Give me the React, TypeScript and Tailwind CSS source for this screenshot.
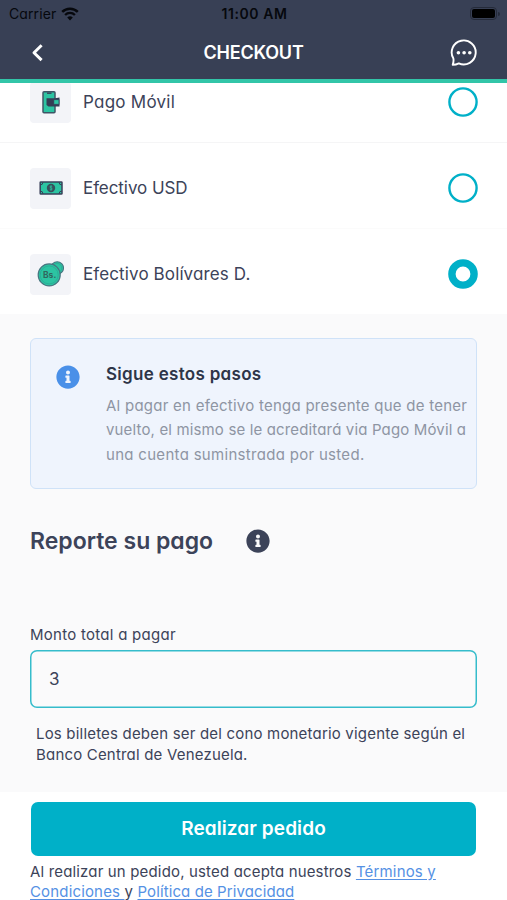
import { FaInfoCircle } from "react-icons/fa";

function PhoneIcon() {
  return (
    <svg width="20" height="24" viewBox="0 0 20 24" fill="none">
      <rect x="2" y="1.7" width="12" height="21" rx="1" fill="#2cc4a2" stroke="#3f5566" strokeWidth="1.5" />
      <path d="M6 3.2h4.5" stroke="#38405a" strokeWidth="1.4" />
      <path d="M5.5 8.2H14l4.5-.7v9H7.5l-2-1.5z" fill="#343d55" />
      <rect x="12.8" y="9.7" width="5.2" height="4.6" fill="#2cc4a2" stroke="#38405a" strokeWidth="0.8" />
    </svg>
  );
}

function BillIcon() {
  return (
    <svg width="24" height="14" viewBox="0 0 24 14" fill="none">
      <rect x="1.2" y="0.9" width="21.8" height="12.2" rx="0.6" fill="#2cc4a2" stroke="#38405a" strokeWidth="1.5" />
      <path d="M1 4a3 3 0 0 0 3-3M20 1a3 3 0 0 0 3 3M1 10a3 3 0 0 1 3 3M20 13a3 3 0 0 1 3-3" stroke="#38405a" strokeWidth="1" />
      <circle cx="12" cy="7" r="4.2" fill="#38505c" />
      <path d="M13.2 5.6c-.5-.7-2.3-.6-2.3.3 0 1.1 2.3.9 2.3 2.1 0 1-1.8 1.1-2.4.3M12 4.4v5.2" stroke="#2cc4a2" strokeWidth="0.8" />
    </svg>
  );
}

function CoinsIcon() {
  return (
    <svg width="27" height="27" viewBox="0 0 27 27">
      <circle cx="20.2" cy="7" r="6.3" fill="#2cc4a2" stroke="#477580" strokeWidth="1.1" />
      <circle cx="20.2" cy="7" r="4.6" fill="none" stroke="#2aa590" strokeWidth="0.7" />
      <circle cx="12.2" cy="13.9" r="11" fill="#2cc4a2" stroke="#477580" strokeWidth="1.2" />
      <circle cx="12.2" cy="13.9" r="9" fill="none" stroke="#2aa590" strokeWidth="0.7" />
      <text x="6" y="17.2" fontSize="8.5" fontWeight="700" fill="#31685f">Bs.</text>
    </svg>
  );
}

function WifiIcon() {
  return (
    <svg width="18" height="14" viewBox="0 0 18 14" fill="none" stroke="#06080d">
      <path d="M1.2 4.9a11 11 0 0 1 15.6 0" strokeWidth="2.5" />
      <path d="M4.1 8a6.9 6.9 0 0 1 9.8 0" strokeWidth="2.3" />
      <path d="M6.2 10.5a4 4 0 0 1 5.6 0L9 13.4z" fill="#06080d" stroke="none" />
    </svg>
  );
}

function ChatIcon() {
  return (
    <svg className="-mr-px" width="28" height="28" viewBox="0 0 28 28" fill="none">
      <path
        d="M3.4 19.6A12 12 0 1 1 8.8 24.4C7.2 25.2 5.2 25.8 2.7 25.8 3.5 23.6 3.8 21.8 3.4 19.6z"
        stroke="#fff"
        strokeWidth="1.9"
        strokeLinejoin="round"
      />
      <circle cx="8.4" cy="13.7" r="1.8" fill="#fff" />
      <circle cx="14.1" cy="13.7" r="1.8" fill="#fff" />
      <circle cx="19.8" cy="13.7" r="1.8" fill="#fff" />
    </svg>
  );
}

function Radio({ selected }: { selected: boolean }) {
  return (
    <svg className="-mr-px ml-auto" width="30" height="30" viewBox="0 0 30 30" fill="none" stroke="#00b0c8">
      {selected ? (
        <circle cx="15" cy="15" r="11.1" strokeWidth="7.4" />
      ) : (
        <circle cx="15" cy="15" r="13.6" strokeWidth="2.4" />
      )}
    </svg>
  );
}

const methods = [
  { name: "Pago Móvil", icon: <PhoneIcon />, selected: false, spacing: "tracking-[0.25px]" },
  { name: "Efectivo USD", icon: <BillIcon />, selected: false, spacing: "tracking-[-0.07px]" },
  { name: "Efectivo Bolívares D.", icon: <CoinsIcon />, selected: true, spacing: "tracking-[0.12px]" },
];

export default function App() {
  return (
    <div className="flex h-[900px] w-full flex-col overflow-hidden bg-[#fafafb] font-[Inter,sans-serif] text-[#3c4359] [font-feature-settings:'cv11']">
      <header className="z-10 h-[83px] shrink-0 border-b-4 border-[#32c5a8] bg-[#384055]">
        <div className="grid h-[27px] grid-cols-3 items-center pr-[7px] pl-[9px] text-[#06080d]">
          <div className="flex items-center gap-[5px] text-[14px] tracking-[0.1px]">
            Carrier
            <WifiIcon />
          </div>
          <span className="text-center text-[14px] font-semibold tracking-[0.6px] whitespace-nowrap">11:00 AM</span>
          <div className="flex items-center justify-end gap-px">
            <div className="h-[13px] w-[27px] rounded-[4px] border border-[#252b3a] p-px">
              <div className="h-full rounded-[2px] bg-black" />
            </div>
            <div className="h-1 w-[2px] rounded-r bg-[#252b3a]" />
          </div>
        </div>
        <div className="grid h-[51px] grid-cols-3 items-center px-[30px] text-white">
          <svg width="15" height="18" viewBox="0 0 15 18" fill="none" stroke="#fff" strokeWidth="3">
            <path d="M11.6 1.3 4 8.7l7.6 7.4" strokeLinejoin="round" />
          </svg>
          <h1 className="text-center text-[18px] font-semibold tracking-[-0.2px]">CHECKOUT</h1>
          <div className="flex justify-end">
            <ChatIcon />
          </div>
        </div>
      </header>

      <section className="-mt-[27px] shrink-0 bg-white">
        {methods.map((method) => (
          <div
            key={method.name}
            className="flex h-[86px] items-center border-t border-[#f5f5f6] px-[30px] pt-[5px] first:border-white last:border-[#fbfbfb]"
          >
            <div className="flex size-[41px] items-center justify-center rounded-[4px] bg-[#f3f4f8]">
              {method.icon}
            </div>
            <span className={`ml-3 pt-[2px] text-[17px] ${method.spacing}`}>{method.name}</span>
            <Radio selected={method.selected} />
          </div>
        ))}
      </section>

      <main className="flex grow flex-col px-[30px] pt-6">
        <div className="flex h-[151px] shrink-0 rounded-[6px] border border-[#cfe2f8] bg-[#eff4fd] pt-[21px] pl-[25px]">
          <FaInfoCircle className="mt-[5px] size-[24px] shrink-0 text-[#4a90e8]" />
          <div className="ml-[26px] whitespace-nowrap">
            <h2 className="text-[17px] leading-[28px] font-semibold tracking-[0.3px] text-[#2d3548]">Sigue estos pasos</h2>
            <p className="mt-[6px] text-[15px] leading-[24.4px] text-[#8e95a3]">
              <span className="tracking-[0.25px]">Al pagar en efectivo tenga presente que de tener</span>
              <br />
              <span className="tracking-[0.15px]">vuelto, el mismo se le acreditará via Pago Móvil a</span>
              <br />
              <span className="tracking-[0.3px]">una cuenta suminstrada por usted.</span>
            </p>
          </div>
        </div>

        <div className="mt-[34px] flex h-9 items-center">
          <h2 className="w-[216px] text-[23px] font-semibold whitespace-nowrap">Reporte su pago</h2>
          <FaInfoCircle className="size-[24px]" />
        </div>

        <label className="mt-[66px] text-[15px] leading-[20px] tracking-[0.27px]">Monto total a pagar</label>
        <div className="mt-[5px] flex h-[58px] shrink-0 items-center rounded-[7px] pt-px pl-[19px] text-[17px] shadow-[inset_0_0_0_1.5px_#35bccb]">
          3
        </div>
        <p className="mt-4 pl-[6px] text-[15px] leading-[20.5px] tracking-[0.19px] whitespace-nowrap">
          Los billetes deben ser del cono monetario vigente según el
          <br />
          Banco Central de Venezuela.
        </p>
      </main>

      <footer className="h-[108px] shrink-0 bg-white px-[30px] pt-[10px]">
        <button className="mx-px block h-[54px] w-[445px] rounded-[7px] bg-[#00b0c8] pt-px text-[19px] font-semibold tracking-[0.1px] text-white">
          Realizar pedido
        </button>
        <p className="mt-[6px] text-[15px] leading-[19.5px] tracking-[0.16px] whitespace-nowrap">
          Al realizar un pedido, usted acepta nuestros{" "}
          <a className="text-[#5591e4] underline underline-offset-2">Términos y</a>
          <br />
          <a className="text-[#5591e4] underline underline-offset-2">Condiciones </a>y{" "}
          <a className="tracking-[0.1px] text-[#5591e4] underline underline-offset-2">Política de Privacidad</a>
        </p>
      </footer>
    </div>
  );
}
